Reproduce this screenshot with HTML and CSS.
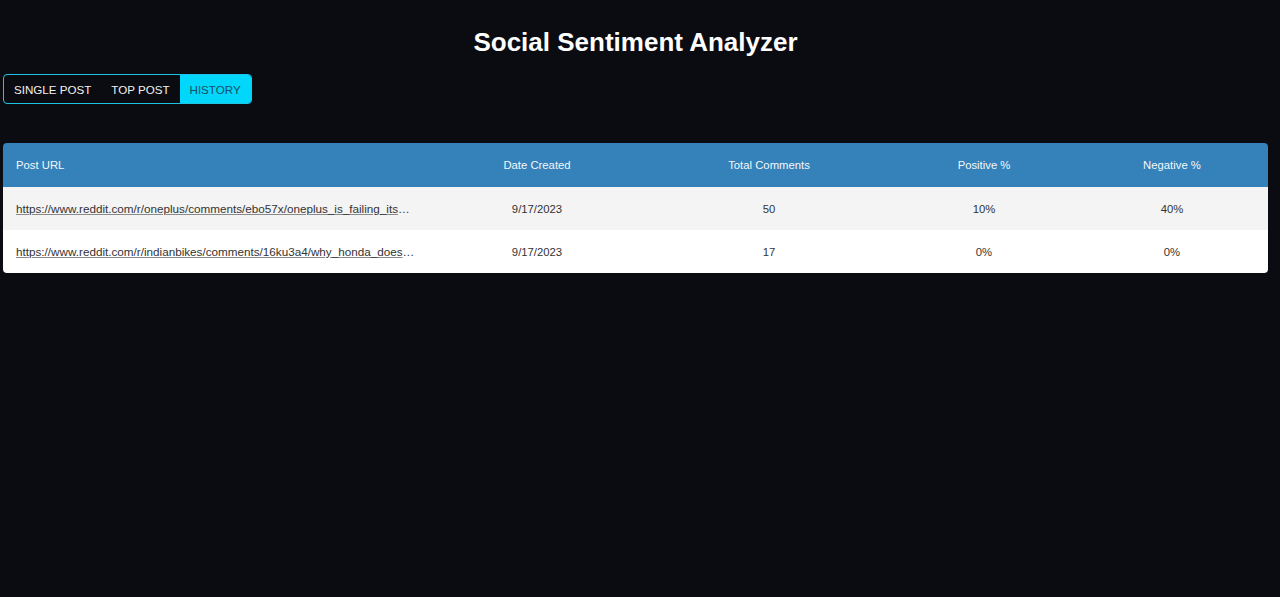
FILE: index.html
```html
<!DOCTYPE html>
<html>
<head>
<meta charset="utf-8">
<title>Social Sentiment Analyzer</title>
<link rel="stylesheet" href="styles.css">
</head>
<body>
<div class="app">
  <h1 class="title">Social Sentiment Analyzer</h1>
  <div class="tabs">
    <button class="tab">SINGLE POST</button>
    <button class="tab">TOP POST</button>
    <button class="tab active">HISTORY</button>
  </div>
  <div class="table-wrap">
    <table class="history">
      <colgroup>
        <col class="c-url"><col class="c-date"><col class="c-total"><col class="c-pos"><col class="c-neg">
      </colgroup>
      <thead>
        <tr>
          <th class="left">Post URL</th>
          <th>Date Created</th>
          <th>Total Comments</th>
          <th>Positive %</th>
          <th>Negative %</th>
        </tr>
      </thead>
      <tbody>
        <tr class="odd">
          <td class="left url"><a href="#">https://www.reddit.com/r/oneplus/comments/ebo57x/oneplus_is_failing_its_customers_and_needs_to_change/</a></td>
          <td>9/17/2023</td>
          <td>50</td>
          <td>10%</td>
          <td>40%</td>
        </tr>
        <tr>
          <td class="left url"><a href="#">https://www.reddit.com/r/indianbikes/comments/16ku3a4/why_honda_doesnt_launch_new_bikes/</a></td>
          <td>9/17/2023</td>
          <td>17</td>
          <td>0%</td>
          <td>0%</td>
        </tr>
      </tbody>
    </table>
  </div>
</div>
</body>
</html>
```

FILE: styles.css
```css
html, body {
  margin: 0;
  padding: 0;
  background: #0b0c11;
  height: 100%;
}
body {
  font-family: "Liberation Sans", Arial, sans-serif;
}
.app {
  padding: 0 12px 0 3px;
}
.title {
  margin: 0;
  padding-top: 27px;
  font-size: 26px;
  line-height: 30px;
  font-weight: bold;
  color: #ffffff;
  text-align: center;
}
.tabs {
  margin-top: 17px;
  display: inline-flex;
  border: 1px solid #1fc3e6;
  border-radius: 4px;
  overflow: hidden;
  height: 28px;
}
.tab {
  font-family: "Liberation Sans", Arial, sans-serif;
  font-size: 11.6px;
  background: transparent;
  color: #f2f2f2;
  border: none;
  padding: 0 10px;
  height: 28px;
  margin: 0;
  cursor: pointer;
}
.tab.active {
  background: #00d7fb;
  color: #184e63;
}
.table-wrap {
  margin-top: 39px;
  border-radius: 4px;
  overflow: hidden;
  width: 1265px;
}
.history {
  width: 1265px;
  border-collapse: collapse;
  table-layout: fixed;
  font-size: 11.3px;
}
.c-url { width: 425px; }
.c-date { width: 218px; }
.c-total { width: 246px; }
.c-pos { width: 184px; }
.c-neg { width: 192px; }
.history th {
  background: #3482b9;
  color: #f3f7fb;
  font-weight: normal;
  height: 44px;
  padding: 0;
  text-align: center;
}
.history td {
  height: 43px;
  padding: 0;
  text-align: center;
  color: #333333;
  background: #ffffff;
}
.history tr.odd td {
  background: #f4f4f4;
}
.history .left {
  text-align: left;
  padding-left: 13px;
  padding-right: 13px;
}
.url {
  white-space: nowrap;
  overflow: hidden;
  text-overflow: ellipsis;
  font-size: 11.7px;
}
.url a {
  color: #333333;
  text-decoration: underline;
  text-decoration-color: #8a8a8a;
}
```
